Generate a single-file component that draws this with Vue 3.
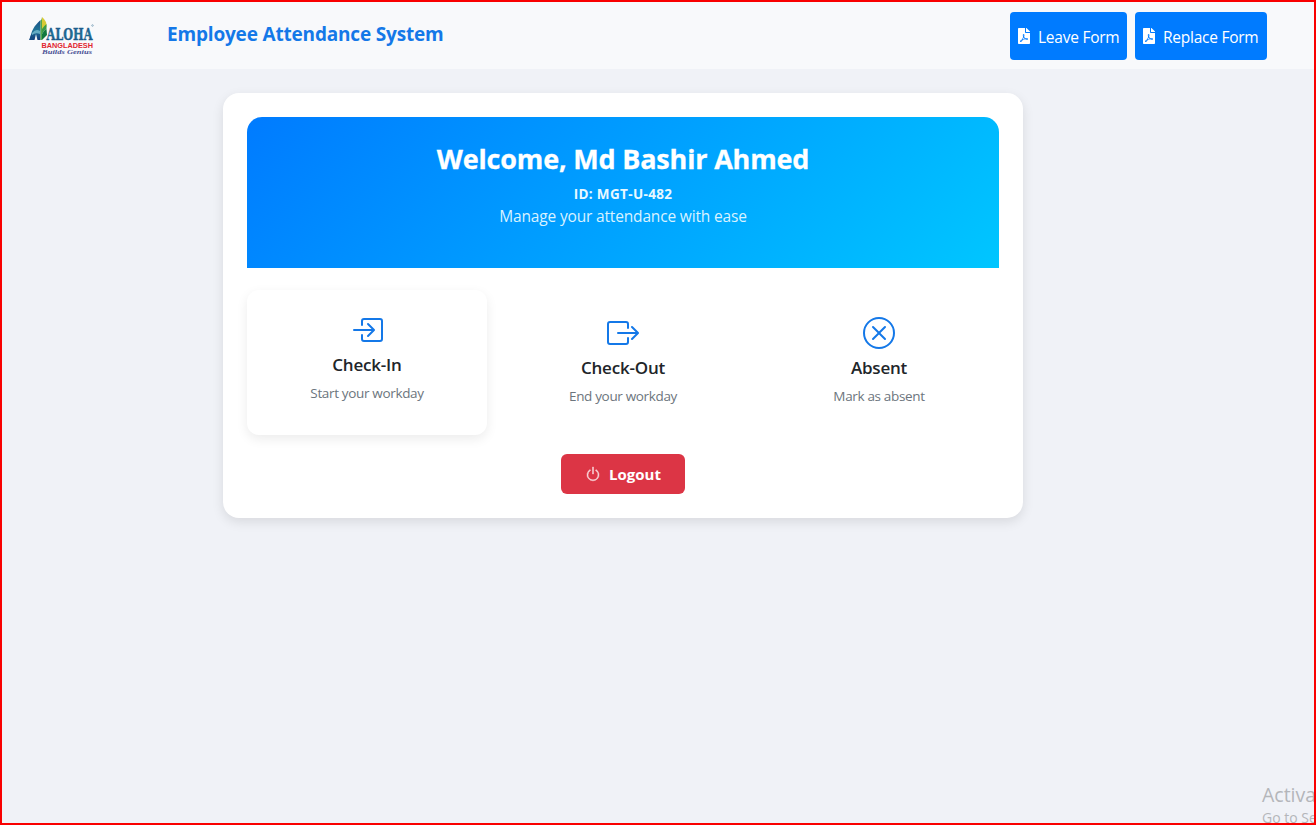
<script setup>
const forms = [
  { label: 'Leave Form', key: 'leave' },
  { label: 'Replace Form', key: 'replace' },
]

const actions = [
  {
    key: 'in',
    title: 'Check-In',
    note: 'Start your workday',
    raised: true,
    paths: [
      'M6 3.5a.5.5 0 0 1 .5-.5h8a.5.5 0 0 1 .5.5v9a.5.5 0 0 1-.5.5h-8a.5.5 0 0 1-.5-.5v-2a.5.5 0 0 0-1 0v2A1.5 1.5 0 0 0 6.5 14h8a1.5 1.5 0 0 0 1.5-1.5v-9A1.5 1.5 0 0 0 14.5 2h-8A1.5 1.5 0 0 0 5 3.5v2a.5.5 0 0 0 1 0z',
      'M11.854 8.354a.5.5 0 0 0 0-.708l-3-3a.5.5 0 1 0-.708.708L10.293 7.5H1.5a.5.5 0 0 0 0 1h8.793l-2.147 2.146a.5.5 0 0 0 .708.708z',
    ],
  },
  {
    key: 'out',
    title: 'Check-Out',
    note: 'End your workday',
    raised: false,
    paths: [
      'M10 12.5a.5.5 0 0 1-.5.5h-8a.5.5 0 0 1-.5-.5v-9a.5.5 0 0 1 .5-.5h8a.5.5 0 0 1 .5.5v2a.5.5 0 0 0 1 0v-2A1.5 1.5 0 0 0 9.5 2h-8A1.5 1.5 0 0 0 0 3.5v9A1.5 1.5 0 0 0 1.5 14h8a1.5 1.5 0 0 0 1.5-1.5v-2a.5.5 0 0 0-1 0z',
      'M15.854 8.354a.5.5 0 0 0 0-.708l-3-3a.5.5 0 0 0-.708.708L14.293 7.5H5.5a.5.5 0 0 0 0 1h8.793l-2.147 2.146a.5.5 0 0 0 .708.708z',
    ],
  },
  {
    key: 'absent',
    title: 'Absent',
    note: 'Mark as absent',
    raised: false,
    paths: [
      'M8 15A7 7 0 1 1 8 1a7 7 0 0 1 0 14m0 1A8 8 0 1 0 8 0a8 8 0 0 0 0 16',
      'M4.646 4.646a.5.5 0 0 1 .708 0L8 7.293l2.646-2.647a.5.5 0 0 1 .708.708L8.707 8l2.647 2.646a.5.5 0 0 1-.708.708L8 8.707l-2.646 2.647a.5.5 0 0 1-.708-.708L7.293 8 4.646 5.354a.5.5 0 0 1 0-.708',
    ],
  },
]
</script>

<template>
  <div class="page">
    <header class="nav">
      <svg class="logo" width="70" height="42" viewBox="0 0 70 42" aria-label="Aloha Bangladesh">
        <defs>
          <linearGradient id="sea" x1="0" y1="0" x2="0" y2="1">
            <stop offset="0" stop-color="#1b4f86" />
            <stop offset="0.5" stop-color="#1f7396" />
            <stop offset="1" stop-color="#173f7c" />
          </linearGradient>
        </defs>
        <path d="M2 24C3 15 6 10 12.500 4V24H9.500L8 18 6.500 24Z" fill="url(#sea)" />
        <path d="M1 24L3 19 5.500 24Z" fill="#174c83" />
        <path d="M4 17Q8 12 12 15V18Q8 16 4 19Z" fill="#65acc3" />
        <path d="M14 1Q19 5 18.500 11L14 14Z" fill="#d8ca35" />
        <path d="M12.500 5Q14 3 14 1V24H12.500Z" fill="#55a64b" />
        <path d="M14 13Q16 10 18.500 8V13Q16 14 14 18Z" fill="#3b9a48" />
        <path d="M14 18Q16 14 18.500 13L19 19 14 24Z" fill="#12783e" />
        <text class="logo-name" x="18.500" y="24" textLength="46" lengthAdjust="spacingAndGlyphs">ALOHA</text>
        <circle cx="64.500" cy="9.500" r=".8" fill="none" stroke="#467b9d" stroke-width=".5" />
        <text class="logo-country" x="13.500" y="31.500" textLength="51.500" lengthAdjust="spacingAndGlyphs">BANGLADESH</text>
        <text class="logo-motto" x="14" y="37.500" textLength="50" lengthAdjust="spacingAndGlyphs">Builds Genius</text>
      </svg>
      <h1 class="brand">Employee Attendance System</h1>
      <nav class="forms">
        <button v-for="form in forms" :key="form.key" :class="['form-btn', form.key]">
          <svg width="12" height="16" viewBox="0 0 384 512" fill="currentColor">
            <path d="M181.900 256.100c-5-16-4.900-46.900-2-46.900 8.400 0 7.600 36.900 2 46.900zm-1.700 47.200c-7.700 20.200-17.300 43.300-28.400 62.700 18.300-7 39-17.200 62.900-21.900-12.700-9.600-24.900-23.400-34.500-40.800zM86.100 428.100c0 .8 13.200-5.400 34.900-40.200-6.700 6.300-29.100 24.500-34.900 40.200zM248 160h136v328c0 13.300-10.700 24-24 24H24c-13.300 0-24-10.700-24-24V24C0 10.700 10.700 0 24 0h200v136c0 13.200 10.800 24 24 24zm-8 171.800c-20-12.200-33.300-29-42.700-53.800 4.500-18.500 11.600-46.600 6.200-64.200-4.700-29.400-42.400-26.500-47.800-6.800-5 18.300-.4 44.100 8.100 77-11.600 27.600-28.700 64.600-40.800 85.800-.1 0-.1.1-.2.1-27.100 13.900-73.600 44.500-54.500 68 5.600 6.900 16 10 21.500 10 17.900 0 35.700-18 61.100-61.800 25.800-8.500 54.100-19.100 79-23.200 21.700 11.800 47.100 19.500 64 19.500 29.200 0 31.200-32 19.700-43.400-13.900-13.600-54.300-9.700-73.600-7.200zM377 105L279 7c-4.500-4.500-10.600-7-17-7h-6v128h128v-6.100c0-6.300-2.500-12.400-7-16.900zm-74.100 255.300c4.100-2.700-2.500-11.900-42.800-9 37.100 15.800 42.800 9 42.800 9z" />
          </svg>
          <span>{{ form.label }}</span>
        </button>
      </nav>
    </header>

    <main class="card">
      <section class="hero">
        <h2>Welcome, Md Bashir Ahmed</h2>
        <p class="emp-id">ID: MGT-U-482</p>
        <p class="tagline">Manage your attendance with ease</p>
      </section>

      <section class="tiles">
        <article v-for="a in actions" :key="a.key" :class="['tile', a.key, { raised: a.raised }]">
          <svg width="32" height="32" viewBox="0 0 16 16" fill="currentColor">
            <path v-for="(d, i) in a.paths" :key="i" :d="d" />
          </svg>
          <h3>{{ a.title }}</h3>
          <p>{{ a.note }}</p>
        </article>
      </section>

      <button class="logout">
        <svg width="16" height="16" viewBox="0 0 16 16" fill="currentColor" stroke="currentColor" stroke-width=".5">
          <path d="M7.500 1v7h1V1z" />
          <path d="M3 8.812a5 5 0 0 1 2.578-4.375l-.485-.874A6 6 0 1 0 11 3.616l-.501.865A5 5 0 1 1 3 8.812" />
        </svg>
        <span>Logout</span>
      </button>
    </main>

    <aside class="watermark">
      <div class="wm-title">Activate Windows</div>
      <div class="wm-note">Go to Settings to activate Windows.</div>
    </aside>
  </div>
</template>

<style>
body {
  margin: 0;
  overflow: hidden;
}
</style>

<style scoped>
.page {
  position: relative;
  box-sizing: border-box;
  width: 100%;
  height: 825px;
  overflow: hidden;
  border: 2px solid #f90000;
  background: #f0f2f7;
  font-family: 'Open Sans', 'Noto Sans', sans-serif;
  color: #212529;
}
h1, h2, h3, p {
  margin: 0;
  white-space: nowrap;
}
button {
  border: 0;
  padding: 0;
  font-family: inherit;
  color: #fff;
  white-space: nowrap;
}
.nav {
  display: flex;
  box-sizing: border-box;
  height: 67px;
  padding: 10px 47px 9px 26px;
  background: #f8f9fb;
}
.logo {
  flex: none;
  margin-top: 4px;
  overflow: visible;
}
.logo-name {
  font: bold 16.5px 'DejaVu Serif', serif;
  fill: url(#sea);
  stroke: #1d5f8d;
  stroke-width: 0.4px;
}
.logo-country {
  font: bold 7px 'Liberation Sans', sans-serif;
  fill: #e1262f;
}
.logo-motto {
  font: italic bold 7px 'Liberation Serif', serif;
  fill: #4a5195;
}
.brand {
  margin-left: 69px;
  font-size: 19px;
  font-weight: 700;
  line-height: 45px;
  letter-spacing: -0.18px;
  color: #1478e8;
}
.forms {
  display: flex;
  gap: 8px;
  margin-left: auto;
}
.form-btn {
  display: flex;
  align-items: center;
  box-sizing: border-box;
  height: 48px;
  padding-left: 8px;
  border-radius: 4px;
  background: #007bff;
  font-size: 15.5px;
  letter-spacing: -0.25px;
}
.form-btn svg {
  flex: none;
  margin-right: 8px;
}
.form-btn span {
  padding-top: 1px;
}
.form-btn.leave { width: 117px; }
.form-btn.replace { width: 132px; }
.card {
  box-sizing: border-box;
  width: 800px;
  height: 425px;
  margin: 24px 0 0 221px;
  padding: 24px;
  border-radius: 16px;
  background: #fff;
  box-shadow: 0 4px 12px rgba(0, 0, 0, 0.1);
}
.hero {
  box-sizing: border-box;
  height: 151px;
  padding-top: 22px;
  border-radius: 15px 15px 0 0;
  background: linear-gradient(135deg, #007bff, #00c6ff);
  color: #fff;
  text-align: center;
}
.hero h2 {
  font-size: 27px;
  font-weight: 700;
  line-height: 40px;
  letter-spacing: -0.18px;
  -webkit-text-stroke: 0.3px #fff;
}
.emp-id {
  font-size: 13.5px;
  font-weight: 700;
  line-height: 30px;
  letter-spacing: 0.35px;
  color: #e8f8ff;
}
.tagline {
  font-size: 15.5px;
  line-height: 14px;
  letter-spacing: -0.17px;
  color: #d9f2ff;
}
.tiles {
  display: grid;
  grid-template-columns: repeat(3, 240px);
  gap: 16px;
  margin-top: 25px;
}
.tile {
  box-sizing: border-box;
  height: 145px;
  padding-top: 24px;
  border-radius: 12px;
  text-align: center;
}
.tile.raised {
  transform: translateY(-3px);
  box-shadow: 0 4px 12px rgba(0, 0, 0, 0.08);
}
.tile svg {
  display: block;
  margin: 0 auto;
  color: #1478e8;
}
.tile h3 {
  padding-top: 1px;
  font-size: 17px;
  font-weight: 600;
  line-height: 36px;
  letter-spacing: -0.2px;
}
.tile p {
  margin-top: -1px;
  font-size: 13.5px;
  line-height: 22px;
  letter-spacing: -0.34px;
  color: #6c757d;
}
.logout {
  display: flex;
  align-items: center;
  width: 124px;
  height: 40px;
  margin: 16px auto 0;
  padding-left: 24px;
  border-radius: 6px;
  background: #dc3545;
  font-size: 15px;
  font-weight: 700;
}
.logout svg {
  margin-right: 8px;
  color: #f9d5d9;
}
/* Overlay that runs off the right and bottom edges of the window */
.watermark {
  position: absolute;
  left: 1260px;
  top: 779px;
  white-space: nowrap;
  color: #b4b6ba;
}
.wm-title {
  font-size: 19.5px;
  line-height: 28px;
}
.wm-note {
  font-size: 14px;
  line-height: 17px;
}
</style>
